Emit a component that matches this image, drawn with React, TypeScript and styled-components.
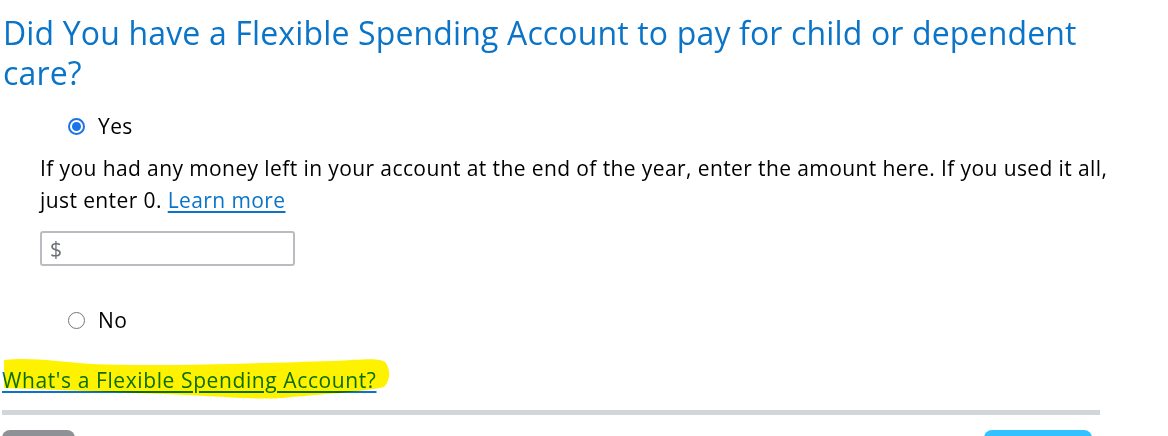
import React, { useState } from "react";
import styled, { createGlobalStyle } from "styled-components";

const GlobalStyle = createGlobalStyle`
  body {
    margin: 0;
    background: #fff;
    font-family: "Open Sans", "Noto Sans", Arial, sans-serif;
    color: #000;
  }
`;

const Page = styled.div`
  width: 1168px;
  height: 436px;
  overflow: hidden;
  padding: 0 0 0 2px;
  box-sizing: border-box;
`;

const Title = styled.h1`
  margin: 13px 0 0 1px;
  font-size: 32px;
  line-height: 40px;
  letter-spacing: 0.15px;
  font-weight: 500;
  color: #0a74c8;
  width: 1090px;
`;

const Options = styled.div`
  margin-top: 17px;
  padding-left: 38px;
`;

const OptionRow = styled.label`
  display: flex;
  align-items: center;
  gap: 13px;
  padding-left: 28px;
  height: 32px;
  font-size: 21px;
  letter-spacing: 0.4px;
  cursor: pointer;
`;

const Radio = styled.span<{ $checked?: boolean }>`
  width: 17px;
  height: 17px;
  border-radius: 50%;
  box-sizing: border-box;
  border: ${(p) => (p.$checked ? "2px solid #1a73e8" : "1px solid #767676")};
  display: inline-flex;
  align-items: center;
  justify-content: center;
  background: #fff;

  &::after {
    content: "";
    display: ${(p) => (p.$checked ? "block" : "none")};
    width: 9px;
    height: 9px;
    border-radius: 50%;
    background: #1a73e8;
  }
`;

const Detail = styled.div`
  margin-top: 10px;
`;

const Note = styled.p`
  margin: 0;
  font-size: 21px;
  line-height: 32px;
  letter-spacing: 0.4px;
  width: 1080px;
`;

const TextLink = styled.a`
  color: #0a74c8;
  text-decoration: underline;
  text-underline-offset: 3px;
  cursor: pointer;
`;

const MoneyInput = styled.div`
  margin-top: 15px;
  width: 255px;
  height: 35px;
  box-sizing: border-box;
  border: 2px solid #b9bcc0;
  border-radius: 3px;
  display: flex;
  align-items: center;
  padding-left: 8px;
  font-size: 21px;
  color: #6b6f74;

  input {
    border: none;
    outline: none;
    flex: 1;
    font: inherit;
    background: transparent;
  }
`;

const NoRow = styled(OptionRow)`
  margin-top: 38px;
`;

const HelpWrap = styled.div`
  position: relative;
  margin-top: 28px;
  height: 32px;
  display: flex;
  align-items: center;
`;

const HelpLink = styled(TextLink)`
  font-size: 21px;
  letter-spacing: 0.6px;
`;

const Highlight = styled.svg`
  position: absolute;
  left: 0;
  top: -16px;
  width: 390px;
  height: 58px;
  mix-blend-mode: multiply;
  pointer-events: none;
`;

const Divider = styled.hr`
  margin: 14px 0 0 0;
  width: 1098px;
  height: 5px;
  border: none;
  background: #d2d5d9;
`;

const Footer = styled.div`
  display: flex;
  justify-content: space-between;
  width: 1090px;
  margin-top: 15px;
`;

const Button = styled.button<{ $primary?: boolean }>`
  width: ${(p) => (p.$primary ? "108px" : "73px")};
  height: 40px;
  border: none;
  border-radius: 8px;
  background: ${(p) => (p.$primary ? "#33c2ff" : "#8e9196")};
`;

export default function App() {
  const [answer, setAnswer] = useState<"yes" | "no">("yes");
  return (
    <Page>
      <GlobalStyle />
      <Title>Did You have a Flexible Spending Account to pay for child or dependent care?</Title>
      <Options>
        <OptionRow onClick={() => setAnswer("yes")}>
          <Radio $checked={answer === "yes"} />
          Yes
        </OptionRow>
        <Detail>
          <Note>
            If you had any money left in your account at the end of the year, enter the amount here. If you used it all,
            just enter 0. <TextLink>Learn more</TextLink>
          </Note>
          <MoneyInput>
            $<input />
          </MoneyInput>
        </Detail>
        <NoRow onClick={() => setAnswer("no")}>
          <Radio $checked={answer === "no"} />
          No
        </NoRow>
      </Options>
      <HelpWrap>
        <HelpLink>What's a Flexible Spending Account?</HelpLink>
        {/* highlighter stroke drawn over the link */}
        <Highlight viewBox="0 0 390 58">
          <path
            d="M2 12 C30 9 50 13 90 16 C160 19 260 15 330 13 C360 12 378 9 384 15 C389 23 388 33 382 39 C360 44 320 46 280 50 C250 52 220 48 160 46 C110 44 60 42 2 40 Z"
            fill="#fff200"
          />
        </Highlight>
      </HelpWrap>
      <Divider />
      <Footer>
        <Button />
        <Button $primary />
      </Footer>
    </Page>
  );
}
